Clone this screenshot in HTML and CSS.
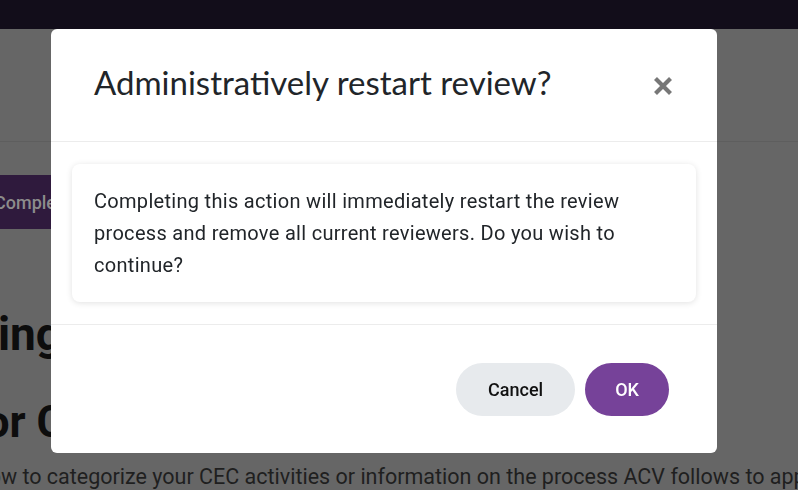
FILE: index.html
```html
<!DOCTYPE html>
<html lang="en">
<head>
<meta charset="utf-8">
<title>Administratively restart review?</title>
<link rel="stylesheet" href="styles.css">
</head>
<body>
<div class="page">
  <div class="topbar"></div>
  <div class="page-header"></div>
  <div class="page-body">
    <div class="page-actions">
      <span class="page-btn">Complete</span>
    </div>
    <h1 class="page-title">Pending</h1>
    <h2 class="page-subtitle">Resources for CEC Activities</h2>
    <p class="page-text">Click below to categorize your CEC activities or information on the process ACV follows to approve them.</p>
  </div>
</div>

<div class="backdrop">
  <div class="modal" role="dialog" aria-labelledby="modal-title">
    <div class="modal-header">
      <h3 class="modal-title" id="modal-title">Administratively restart review?</h3>
      <button class="modal-close" aria-label="Close">
        <svg width="20" height="20" viewBox="0 0 20 20" aria-hidden="true">
          <path d="M2.5 2.5 L17.5 17.5 M17.5 2.5 L2.5 17.5" stroke="#777777" stroke-width="4.2" stroke-linecap="butt" fill="none"/>
        </svg>
      </button>
    </div>
    <div class="modal-body">
      <div class="modal-card">
        Completing this action will immediately restart the review process and remove all current reviewers. Do you wish to continue?
      </div>
    </div>
    <div class="modal-footer">
      <button class="btn btn-cancel">Cancel</button>
      <button class="btn btn-ok">OK</button>
    </div>
  </div>
</div>
</body>
</html>
```

FILE: styles.css
```css
* { box-sizing: border-box; }

html, body {
  margin: 0;
  padding: 0;
  width: 798px;
  height: 490px;
  overflow: hidden;
}

body {
  font-family: Roboto, "Liberation Sans", Arial, sans-serif;
  background: #666666;
}

.page {
  display: flex;
  flex-direction: column;
  height: 490px;
  overflow: hidden;
}

.topbar {
  height: 29px;
  background: #120d1a;
  flex: none;
}

.page-header {
  height: 113px;
  border-bottom: 1px solid #5e5e5e;
  flex: none;
}

.page-body {
  display: flex;
  flex-direction: column;
  white-space: nowrap;
}

.page-actions {
  padding-top: 33px;
  display: flex;
}

.page-btn {
  display: inline-flex;
  align-items: center;
  height: 54px;
  padding: 0 20px;
  margin-left: -26px;
  background: #2f1a3d;
  color: #8c8c8c;
  font-size: 18px;
  font-weight: 500;
  border-radius: 4px;
}

.page-title {
  margin: 78px 0 0 -108px;
  font-size: 46px;
  font-weight: 700;
  line-height: 54px;
  color: #0d0d0d;
}

.page-subtitle {
  margin: 35px 0 0 -251px;
  font-size: 44px;
  font-weight: 700;
  line-height: 52px;
  color: #0d0d0d;
}

.page-text {
  margin: 15px 0 0 -92px;
  font-size: 21.5px;
  line-height: 28px;
  color: #1f1f1f;
}

.backdrop {
  position: fixed;
  inset: 0;
}

.modal {
  position: absolute;
  left: 51px;
  top: 29px;
  width: 666px;
  height: 424px;
  background: #ffffff;
  border-radius: 6px;
  display: flex;
  flex-direction: column;
}

.modal-header {
  height: 113px;
  flex: none;
  display: flex;
  align-items: center;
  justify-content: space-between;
  padding: 0 44px 0 43px;
  border-bottom: 1px solid #ececec;
}

.modal-title {
  margin: 0;
  font-family: Lato, "Noto Sans", sans-serif;
  font-weight: 400;
  font-size: 33px;
  color: #212529;
  padding-bottom: 6px;
}

.modal-close {
  border: 0;
  background: none;
  padding: 0;
  width: 20px;
  height: 20px;
  display: flex;
  margin-top: 2px;
}

.modal-body {
  padding: 22px 21px;
  flex: none;
}

.modal-card {
  background: #ffffff;
  border-radius: 8px;
  box-shadow: 0 1px 6px rgba(0, 0, 0, 0.12);
  padding: 21px 22px 21px 22px;
  font-size: 20px;
  letter-spacing: 0.3px;
  line-height: 32px;
  color: #212529;
}

.modal-footer {
  flex: 1;
  border-top: 1px solid #ececec;
  display: flex;
  align-items: center;
  justify-content: flex-end;
  gap: 10px;
  padding: 0 48px 0 0;
}

.btn {
  height: 53px;
  padding: 0 30px;
  border: 0;
  border-radius: 27px;
  font-family: Roboto, "Liberation Sans", Arial, sans-serif;
  font-size: 18px;
  font-weight: 500;
}

.btn-cancel {
  background: #e7eaed;
  color: #111111;
  padding: 0 32px;
}

.btn-ok {
  background: #764299;
  color: #ffffff;
}
```
